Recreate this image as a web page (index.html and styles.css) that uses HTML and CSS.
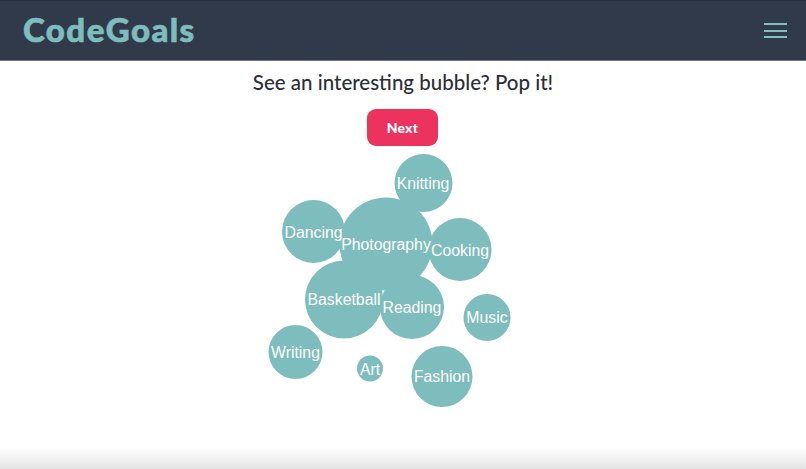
FILE: index.html
```html
<!DOCTYPE html>
<html lang="en">
<head>
<meta charset="utf-8">
<title>CodeGoals</title>
<link rel="stylesheet" href="styles.css">
</head>
<body>
<header class="topbar">
  <a class="brand" href="#">CodeGoals</a>
  <button class="menu" aria-label="Menu"><span></span><span></span><span></span></button>
</header>
<main class="content">
  <h1 class="prompt">See an interesting bubble? Pop it!</h1>
  <button class="next">Next</button>
  <svg class="bubbles" width="806" height="320" viewBox="0 146 806 320">
    <g class="circles">
      <circle cx="423.5" cy="183" r="29"/>
      <circle cx="313.5" cy="231.5" r="31.5"/>
      <circle cx="460" cy="249.5" r="31.5"/>
      <circle cx="386" cy="244" r="46.5"/>
      <circle cx="344" cy="299.5" r="39"/>
      <circle cx="412" cy="307" r="32"/>
      <circle cx="487" cy="317.5" r="23.5"/>
      <circle cx="295.5" cy="352" r="27"/>
      <circle cx="370" cy="368.5" r="13"/>
      <circle cx="442" cy="376.5" r="30.5"/>
    </g>
    <g class="labels">
      <text x="423" y="189">Knitting</text>
      <text x="313.500" y="238">Dancing</text>
      <text x="460" y="255.500">Cooking</text>
      <text x="386" y="250">Photography</text>
      <text x="344" y="305">Basketball</text>
      <text x="412" y="313">Reading</text>
      <text x="487" y="323">Music</text>
      <text x="295.500" y="358">Writing</text>
      <text x="370" y="374.500">Art</text>
      <text x="442" y="382">Fashion</text>
    </g>
  </svg>
</main>
<div class="fade"></div>
</body>
</html>
```
FILE: styles.css
```css
html, body {
  margin: 0;
  height: 100%;
  overflow: hidden;
  background: #fff;
}
body {
  position: relative;
  font-family: "Lato", "Liberation Sans", sans-serif;
}
.topbar {
  box-sizing: border-box;
  height: 61px;
  display: flex;
  align-items: center;
  justify-content: space-between;
  padding: 0 19px 0 23px;
  background: #303a4b;
  border-top: 1px solid #293243;
  border-bottom: 1px solid #6d7785;
}
.brand {
  margin-top: -3px;
  color: #7dbdbd;
  font-size: 33px;
  font-weight: 900;
  letter-spacing: 1.45px;
  -webkit-text-stroke: 0.7px #7dbdbd;
  text-decoration: none;
}
.menu {
  display: flex;
  flex-direction: column;
  gap: 4.6px;
  padding: 0;
  border: 0;
  background: none;
}
.menu span {
  display: block;
  width: 23px;
  height: 2px;
  background: #80c0c0;
}
.content {
  display: flex;
  flex-direction: column;
  align-items: center;
}
.prompt {
  margin: 8px 0 13px;
  font-size: 20.5px;
  line-height: 27px;
  font-weight: 500;
  color: #2b2f36;
}
.next {
  width: 71px;
  height: 37px;
  margin-right: 1px;
  padding: 0;
  border: 0;
  border-radius: 9px;
  background: #ec335f;
  color: #fff;
  font-family: inherit;
  font-size: 14px;
  font-weight: 900;
  letter-spacing: 0.2px;
}
.bubbles {
  display: block;
}
.circles circle {
  fill: #7dbdbd;
}
.labels text {
  fill: #fff;
  font-family: "Liberation Sans", Arial, sans-serif;
  font-size: 15.8px;
  text-anchor: middle;
}
.fade {
  position: absolute;
  left: 0;
  right: 0;
  bottom: 0;
  height: 22px;
  background: linear-gradient(to bottom, rgba(228, 228, 228, 0), #e4e4e4);
  pointer-events: none;
}
```
